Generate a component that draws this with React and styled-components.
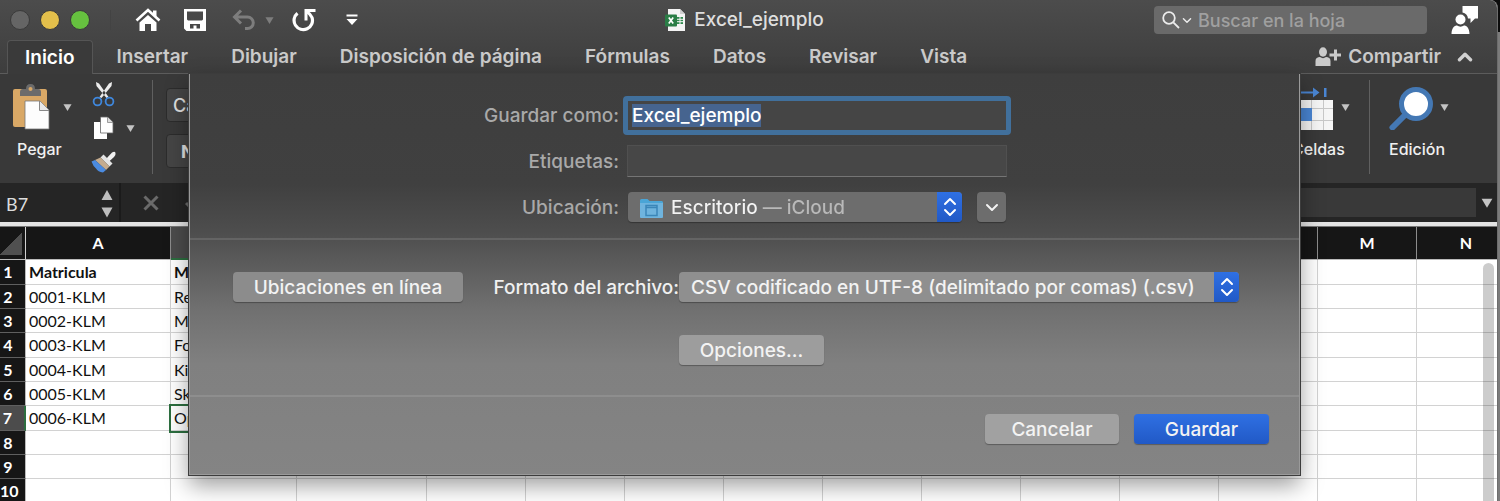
import React, { useEffect, useRef } from "react";
import styled, { createGlobalStyle, css } from "styled-components";

const Global = createGlobalStyle`
  * { box-sizing: border-box; }
  body { margin: 0; background: #7b7b7b; font-family: Inter, "Liberation Sans", sans-serif; }
  button, input, select { font: inherit; margin: 0; }
  svg { display: block; flex: none; }
`;

const Desktop = styled.div`
  min-height: 100vh;
  padding-right: 2px;
  background: linear-gradient(#0c0c0c 32px, #7b7b7b 32px);
`;
const Window = styled.div`
  position: relative;
  height: 100vh;
  overflow: hidden;
  background: #fff;
  border-right: 1px solid #6d6d6d;
  border-top-right-radius: 8px;
`;

/* Title bar and tabs */
const Chrome = styled.header`
  background: linear-gradient(#4c4c4c, #3d3d3d);
`;
const TitleBar = styled.div`
  display: grid;
  grid-template-columns: 1fr auto 1fr;
  align-items: center;
  height: 40px;
  padding-right: 8px;
`;
const TitleLeft = styled.div`
  display: flex;
  align-items: center;
  height: 38px;
`;
const Lights = styled.div`
  display: flex;
  gap: 10px;
  padding: 0 20px 0 10px;
  border-right: 1px solid #434343;
`;
const Light = styled.button`
  width: 20px;
  height: 20px;
  padding: 0;
  border: 1px solid #3a3a3a;
  border-radius: 50%;
  background: ${(p) => p.$color};
`;
const QuickTools = styled.div`
  display: flex;
  align-items: center;
  padding-left: 24px;
`;
const IconButton = styled.button`
  display: flex;
  align-items: center;
  justify-content: center;
  width: ${(p) => p.$w || 24}px;
  padding: 0;
  border: 0;
  background: none;
  color: ${(p) => p.$color || "#fff"};
`;
const Title = styled.h1`
  display: flex;
  align-items: center;
  gap: 8px;
  margin: 0;
  font-size: 19px;
  line-height: 24px;
  font-weight: 500;
  color: #dedede;
`;
const TitleRight = styled.div`
  display: flex;
  align-items: center;
  justify-content: flex-end;
  gap: 24px;
  padding-right: 10px;
`;
const Search = styled.label`
  display: flex;
  align-items: center;
  gap: 2px;
  width: 273px;
  height: 28px;
  padding-left: 8px;
  border-radius: 4px;
  background: #6a6a6a;
  color: #ececec;
`;
const SearchInput = styled.input`
  flex: 1;
  min-width: 0;
  margin-left: 4px;
  padding: 0;
  border: 0;
  outline: 0;
  background: none;
  color: #fff;
  font-size: 18px;
  font-weight: 500;
  &::placeholder { color: #a0a0a0; opacity: 1; }
`;
const TabBar = styled.nav`
  display: flex;
  align-items: stretch;
  height: 34px;
  border-bottom: 1px solid #5c5c5c;
  padding-left: 7px;
`;
const Tab = styled.button`
  padding: 1px 21px 0 22px;
  border: 0;
  background: none;
  font-size: 19px;
  line-height: 32px;
  font-weight: 600;
  color: #cacaca;
  ${(p) => p.$active && css`
    height: 34px;
    padding: 0 18px 0 17px;
    margin-right: 1px;
    border: 1px solid #555;
    border-bottom: 0;
    border-radius: 4px 4px 0 0;
    background: #3a3a3a;
    color: #fff;
  `}
`;
const TabActions = styled.div`
  display: flex;
  align-items: center;
  gap: 16px;
  margin-left: auto;
  padding: 0 24px 0 0;
`;
const Share = styled.button`
  display: flex;
  align-items: center;
  gap: 6px;
  padding: 0;
  border: 0;
  background: none;
  color: #cacaca;
  font-size: 19px;
  font-weight: 600;
`;

/* Ribbon */
const Ribbon = styled.div`
  display: flex;
  justify-content: space-between;
  height: 109px;
  padding: 6px 48px 0 11px;
  background: #393939;
`;
const Group = styled.div`
  display: flex;
`;
const BigTool = styled.button`
  display: grid;
  grid-template-columns: ${(p) => p.$icon}px auto;
  align-items: center;
  column-gap: ${(p) => p.$gap || 12}px;
  align-content: start;
  padding: 4px 0 0;
  border: 0;
  background: none;
  color: #f0f0f0;
  font-size: 16px;
  line-height: 20px;
  font-weight: 500;
`;
const ToolName = styled.span`
  grid-column: 1 / -1;
  margin-top: 9px;
  text-align: left;
  padding-left: ${(p) => p.$indent || 0}px;
`;
const SmallTools = styled.div`
  display: grid;
  grid-template-columns: 24px 12px;
  grid-auto-rows: 34px;
  column-gap: 10px;
  align-items: center;
  margin-left: 20px;
  margin-top: -3px;
`;
const Divider = styled.div`
  width: 1px;
  height: 94px;
  margin: 0 ${(p) => p.$right}px 0 ${(p) => p.$left}px;
  background: #606060;
`;
const FontTools = styled.div`
  display: grid;
  gap: 12px;
  align-content: start;
  padding-top: 8px;
`;
const FontBox = styled.button`
  width: 160px;
  height: 34px;
  border: 1px solid #2c2c2c;
  border-radius: 4px;
  background: #454545;
  color: #e0e0e0;
  font-size: 18px;
  text-align: left;
  font-weight: ${(p) => (p.$bold ? 700 : 500)};
  padding: 0 0 0 ${(p) => (p.$bold ? 14 : 6)}px;
`;

/* Formula bar */
const FormulaBar = styled.div`
  display: flex;
  align-items: center;
  height: 39px;
  background: #252525;
`;
const NameBox = styled.label`
  display: flex;
  align-items: center;
  justify-content: space-between;
  width: 121px;
  height: 39px;
  padding: 2px 5px 0 6px;
  border-right: 2px solid #1b1b1b;
`;
const NameInput = styled.input`
  width: 80px;
  padding: 0;
  border: 0;
  background: none;
  color: #dcdcdc;
  font-family: Lato, "Liberation Sans", sans-serif;
  font-size: 18px;
`;
const FormulaActions = styled.div`
  display: flex;
  gap: 26px;
  padding: 0 20px 0 22px;
  color: #6a6a6a;
`;
const FormulaInput = styled.input`
  flex: 1;
  height: 29px;
  border: 0;
  background: #393939;
  color: #fff;
`;
const Sheet = styled.div`
  position: relative;
  border-top: 4px solid #e4e4e4;
  background: #777;
  padding-top: 1px;
`;
const Grid = styled.table`
  width: 1600px;
  table-layout: fixed;
  border-collapse: separate;
  border-spacing: 0;
  background: #fff;
  font-family: Lato, "Liberation Sans", sans-serif;
  font-size: 16px;
  line-height: 22px;
`;
const ColHead = styled.th`
  height: 33px;
  padding: 0;
  border-right: 1px solid #8c8c8c;
  border-bottom: 1px solid #bbb;
  background: #161616;
  color: #fff;
  ${(p) => p.$active && css`
    background: #4c4c4c;
    border-bottom: 2px solid #2c6e3f;
  `}
`;
const Corner = styled(ColHead)`
  background: linear-gradient(135deg, transparent 50%, #505050 50%) 0 6px / 22px 22px no-repeat #161616;
  border-right-color: #d0d0d0;
`;
const Row = styled.tr`
  height: 24px;
  &:nth-child(3n + 1) { height: 25px; }
`;
const RowHead = styled.th`
  padding: 0 9px 0 0;
  border-right: 1px solid #bbb;
  border-bottom: 1px solid #5f5f5f;
  background: #161616;
  color: #fff;
  white-space: nowrap;
  ${(p) => p.$active && css`
    background: #4c4c4c;
    border-right: 2px solid #2c6e3f;
  `}
`;
const Cell = styled.td`
  padding: 0 3px;
  border-right: 1px solid #d2d2d2;
  border-bottom: 1px solid #d2d2d2;
  color: #111;
  overflow: hidden;
  white-space: nowrap;
  font-weight: ${(p) => (p.$bold ? 700 : 400)};
  ${(p) => p.$active && css`outline: 2px solid #2c6e3f;`}
`;
const ScrollThumb = styled.div`
  position: absolute;
  top: 37px;
  right: 3px;
  width: 11px;
  height: 400px;
  border-radius: 6px;
  background: rgba(0, 0, 0, 0.2);
`;

/* Save sheet */
const SheetLayer = styled.div`
  position: absolute;
  inset: 74px 0 auto;
  display: flex;
  justify-content: center;
  padding-right: 8px;
`;
const Dialog = styled.form`
  width: 1111px;
  border: 1px solid #9a9a9a;
  border-top: 0;
  background: linear-gradient(#3e3e3e 0, #404040 110px, #4e4e4e 160px, #707070 235px, #808080 290px, #848484 100%);
  box-shadow: 0 0 0 1px #3c3c3c, 0 10px 22px rgba(0, 0, 0, 0.4);
  color: #f0f0f0;
  font-size: 19px;
  line-height: 25px;
  font-weight: 500;
`;
const NameSection = styled.div`
  display: grid;
  grid-template-columns: 1fr 388px;
  grid-auto-rows: 46px;
  align-items: center;
  column-gap: 4px;
  padding: 18px 288px 8px 0;
  border-bottom: 2px solid #646464;
`;
const FieldLabel = styled.label`
  text-align: right;
  color: ${(p) => (p.$bright ? "#f0f0f0" : "#a9a9a9")};
`;
const NameField = styled.input`
  height: 39px;
  padding: 0 4px;
  border: 5px solid #41709c;
  border-radius: 4px;
  outline: 0;
  background: #454545;
  color: #fff;
  line-height: 25px;
  &::selection { background: #46648f; color: #fff; }
`;
const TagsField = styled.input`
  height: 32px;
  margin: 0 4px;
  border: 1px solid #505050;
  border-bottom-color: #757575;
  background: #474747;
  color: #fff;
`;
const LocationRow = styled.div`
  display: flex;
  gap: 15px;
  padding: 0 5px;
`;
const Popup = styled.div`
  display: flex;
  flex: 1;
  height: 30px;
  border-radius: 4px;
  overflow: hidden;
  background: ${(p) => p.$tone};
  box-shadow: 0 1px 1px rgba(0, 0, 0, 0.3);
`;
const PopupSelect = styled.select`
  flex: 1;
  min-width: 0;
  appearance: none;
  padding: 0 0 0 12px;
  border: 0;
  outline: 0;
  background: none;
  color: #f3f3f3;
`;
const PlaceSelect = styled(PopupSelect)`
  padding-left: 8px;
  background: linear-gradient(90deg, #f3f3f3 98px, #b9b9b9 98px);
  background-clip: text;
  -webkit-background-clip: text;
  color: transparent;
`;
const FolderSlot = styled.span`
  display: flex;
  align-items: center;
  padding: 2px 0 0 12px;
`;
const Stepper = styled.span`
  display: flex;
  align-items: center;
  justify-content: center;
  width: 25px;
  background: linear-gradient(#2f70e3, #2159c6);
  color: #fff;
`;
const PushButton = styled.button`
  display: flex;
  align-items: center;
  justify-content: center;
  width: ${(p) => p.$w}px;
  height: 30px;
  padding: 0;
  border: 0;
  border-radius: 4px;
  background: ${(p) => (p.$primary ? "linear-gradient(#2f70e3, #2159c6)" : p.$tone)};
  box-shadow: 0 1px 1px rgba(0, 0, 0, 0.3);
  color: #f3f3f3;
`;
const FormatSection = styled.div`
  display: grid;
  grid-template-columns: 230px 216px 560px;
  gap: 33px 0;
  align-items: center;
  padding: 32px 0 30px 43px;
  border-bottom: 2px solid #8e8e8e;
`;
const OptionsSlot = styled.div`
  grid-column: 3;
`;
const Footer = styled.div`
  display: flex;
  justify-content: flex-end;
  gap: 15px;
  padding: 17px 30px 30px;
`;

const Down = ({ size = 9, color = "#c4c4c4" }) => (
  <svg width={size} height={size} viewBox="0 0 10 10"><path d="M0.5 1.5h9L5 9z" fill={color} /></svg>
);
const Chevron = ({ w = 14, h = 9, up, sw = 2 }) => (
  <svg width={w} height={h} viewBox="0 0 14 9" fill="none" stroke="currentColor" strokeWidth={sw} strokeLinecap="round" strokeLinejoin="round">
    <path d={up ? "M2 7l5-5 5 5" : "M2 2l5 5 5-5"} />
  </svg>
);
const StepIcon = () => (
  <svg width="14" height="20" viewBox="0 0 14 20" fill="none" stroke="currentColor" strokeWidth="2" strokeLinecap="round" strokeLinejoin="round">
    <path d="M2 7l5-5 5 5M2 13l5 5 5-5" />
  </svg>
);
const HomeIcon = () => (
  <svg width="26" height="24" viewBox="0 0 26 24">
    <path d="M1.500 12.500L13 2L24.500 12.500" fill="none" stroke="#fff" strokeWidth="2.600" />
    <path d="M18 2.500h3.500v6.500l-3.500-3z M4.500 14.500L13 7L21.500 14.500V23h-5.500v-7h-6v7H4.500z" fill="#fff" />
  </svg>
);
const SaveIcon = () => (
  <svg width="22" height="22" viewBox="0 0 22 22">
    <path fillRule="evenodd" fill="#fff" d="M0 0h22v22H2.500L0 19.500z M3 2.500v8l1 1h14l1-1v-8z M6 15v4.500h3.500v-3h3V19.500H16V15z" />
  </svg>
);
const UndoIcon = () => (
  <svg width="24" height="22" viewBox="0 0 24 22" fill="none" stroke="#7d7d7d" strokeWidth="3">
    <path d="M9 1.500L2.500 8L9 14.500M3 8h12.500a5.800 5.800 0 0 1 0 11.600H13" />
  </svg>
);
const RedoIcon = () => (
  <svg width="24" height="24" viewBox="0 0 24 24" fill="none" stroke="#fff" strokeWidth="3.200">
    <path d="M5.500 5.200A9.200 9.200 0 1 0 20 9.500C19 7 17 5 14 3" />
    <path d="M23.500 2.500H14V12.500" strokeWidth="3" />
  </svg>
);
const CustomizeIcon = () => (
  <svg width="12" height="12" viewBox="0 0 12 12" fill="#fff"><path d="M0.500 0.500h11v2h-11zM0.500 5h11L6 11z" /></svg>
);
const ExcelDoc = () => (
  <svg width="21" height="23" viewBox="0 0 21 23">
    <path d="M3 0h12l5 5v17H3z" fill="#f4f4f4" /><path d="M15 0l5 5h-5z" fill="#cfcfcf" />
    <path d="M12 8h6v7h-6z" fill="#2f8a4e" /><path d="M12 10.300h6M12 12.700h6M15 8v7" stroke="#f4f4f4" strokeWidth="1" />
    <rect x="0" y="5.500" width="12" height="12" rx="1" fill="#2a7d46" />
    <path d="M3.800 8.500l4.400 6M8.200 8.500l-4.400 6" stroke="#fff" strokeWidth="1.700" />
  </svg>
);
const SearchIcon = () => (
  <svg width="18" height="18" viewBox="0 0 18 18" fill="none" stroke="currentColor" strokeWidth="1.800">
    <circle cx="7" cy="7" r="5.800" /><path d="M11.300 11.300L17 17" />
  </svg>
);
const FeedbackIcon = () => (
  <svg width="28" height="28" viewBox="0 0 28 28" fill="#fff">
    <path d="M11.500 0H27v12.500h-3L19.500 17v-4.500h-2.500a7 7 0 0 0-5.500-6z" />
    <circle cx="9.500" cy="13.500" r="5" /><path d="M0.500 28c0-6 3-8.500 5.500-8.500 2 1.500 5 1.500 7 0 2.500 0 5.500 2.500 5.500 8.500z" />
  </svg>
);
const ShareIcon = () => (
  <svg width="27" height="19" viewBox="0 0 27 19" fill="currentColor">
    <ellipse cx="8" cy="5" rx="4" ry="4.700" /><path d="M0.500 19v-5c0-3 2-4 4.500-4 2 1.500 4 1.500 6 0 2.500 0 4.500 1 4.500 4v5z" />
    <path d="M19 2.500h3v4h4v3h-4v4h-3v-4h-4.500v-3H19z" />
  </svg>
);
const PasteIcon = () => (
  <svg width="40" height="46" viewBox="0 0 40 46">
    <rect x="2" y="5" width="34" height="38" rx="2" fill="#d9a866" />
    <path d="M9 12V8q0-3 3-3h3q0-5 4.500-5T24 5h3q3 0 3 3v4z" fill="#6b6b6b" /><circle cx="19.500" cy="5" r="2" fill="#d9a866" />
    <path d="M14 17h15l9 9v19H14z" fill="#fdfdfd" stroke="#777" strokeWidth="0.800" /><path d="M28.500 17v9.500H38" fill="#e8e8e8" stroke="#888" />
  </svg>
);
const CutIcon = () => (
  <svg width="24" height="26" viewBox="0 0 24 26" fill="none">
    <path d="M4 1l3 1.500L16.500 16l-2 1L4.500 5zM20 1l-3 1.500L7.500 16l2 1L19.500 5z" fill="#ececec" />
    <circle cx="5.500" cy="20.500" r="3.900" stroke="#3f87dc" strokeWidth="1.800" /><circle cx="17.500" cy="20.500" r="3.900" stroke="#3f87dc" strokeWidth="1.800" />
  </svg>
);
const CopyIcon = () => (
  <svg width="22" height="24" viewBox="0 0 22 24">
    <path d="M1 6h9l4 5v12H1z" fill="#fff" /><path d="M7.500 1h7l5.500 5.500V17H7.500z" fill="#fff" stroke="#666" strokeWidth="0.800" />
    <path d="M14.500 1v5.500H20" fill="#ddd" stroke="#888" strokeWidth="0.800" />
  </svg>
);
const BrushIcon = () => (
  <svg width="26" height="23" viewBox="0 0 26 23">
    <path d="M15 8L21 1.500Q24 0 24.500 2T23 6L17.500 11z" fill="#f2f2f2" />
    <path d="M12.500 3.500L21.500 12.500L18.500 15.500L9.500 6.500z" fill="#e4e4e4" />
    <path d="M9.500 6.500L18.500 15.500L15 19L4 9z" fill="#c4ab8e" />
    <path d="M4 9L15 19L12 21.500Q7 21 5 17.500Q2 15 0.500 10.500z" fill="#4b8be0" />
  </svg>
);
const CellsIcon = () => (
  <svg width="50" height="46" viewBox="0 0 50 46">
    <path d="M2 8.500h28" stroke="#4a86d4" strokeWidth="2" />
    <path d="M29 3.500l6.500 5-6.500 5z M40 4h2.500v9H40z" fill="#4a86d4" />
    <path d="M0 16h49v30H0z" fill="#f6f6f6" /><path d="M0 24.500h49M0 36.500h49M15.500 16v30M27.500 16v30M39.500 16v30" stroke="#c8c8c8" />
    <path d="M10 24h18v13H10z" fill="#4a86d4" />
  </svg>
);
const FindIcon = () => (
  <svg width="46" height="46" viewBox="0 0 46 46">
    <path d="M3.500 43.500L17 30" stroke="#4478b4" strokeWidth="6" strokeLinecap="round" />
    <circle cx="27" cy="20" r="14.500" fill="#fff" stroke="#4478b4" strokeWidth="5" />
  </svg>
);
const FolderIcon = () => (
  <svg width="23" height="19" viewBox="0 0 23 19">
    <path d="M0 1.500Q0 0 1.500 0h6l2 2H22L23 3v14H0z" fill="#4aa5d6" /><path d="M0 4h23V18q0 1-1 1H1q-1 0-1-1z" fill="#6fb4de" />
    <path d="M6 6.500h11v10H6zM6 8.500h11" fill="none" stroke="#3b86b8" strokeWidth="1.500" />
  </svg>
);
const UpDown = () => (
  <svg width="14" height="30" viewBox="0 0 14 30" fill="#bdbdbd"><path d="M1.500 11h11L7 1zM1.500 18.500h11L7 28.500z" /></svg>
);
const CrossIcon = () => (
  <svg width="16" height="16" viewBox="0 0 16 16" stroke="currentColor" strokeWidth="3"><path d="M1.500 1.500l13 13M14.500 1.500l-13 13" /></svg>
);
const CheckIcon = () => (
  <svg width="16" height="16" viewBox="0 0 16 16" fill="none" stroke="currentColor" strokeWidth="3"><path d="M1 8l5 5 9-11" /></svg>
);

const tabs = ["Insertar", "Dibujar", "Disposición de página", "Fórmulas", "Datos", "Revisar", "Vista"];
const columns = [
  ["A", 145], ["B", 126], ["C", 130], ["D", 99], ["E", 99], ["F", 99], ["G", 99],
  ["H", 99], ["I", 99], ["J", 99], ["K", 99], ["L", 99], ["M", 99], ["N", 99],
];
const rows = [
  ["Matricula", "Marca"], ["0001-KLM", "Renault"], ["0002-KLM", "Mazda"], ["0003-KLM", "Ford"],
  ["0004-KLM", "Kia"], ["0005-KLM", "Skoda"], ["0006-KLM", "Opel"], [], [], [],
];

export default function App() {
  const nameRef = useRef(null);
  useEffect(() => {
    nameRef.current.focus();
    nameRef.current.select();
  }, []);

  return (
    <Desktop>
      <Global />
      <Window>
        <Chrome>
          <TitleBar>
            <TitleLeft>
              <Lights>
                <Light aria-label="Cerrar" $color="#656565" />
                <Light aria-label="Minimizar" $color="#e3bf4b" />
                <Light aria-label="Ampliar" $color="#66c13f" />
              </Lights>
              <QuickTools>
                <IconButton aria-label="Inicio" $w={26}><HomeIcon /></IconButton>
                <IconButton aria-label="Guardar" $w={68}><SaveIcon /></IconButton>
                <IconButton aria-label="Deshacer" $w={30}><UndoIcon /></IconButton>
                <IconButton aria-label="Historial" $w={20}><Down color="#7d7d7d" /></IconButton>
                <IconButton aria-label="Rehacer" $w={50}><RedoIcon /></IconButton>
                <IconButton aria-label="Personalizar" $w={46}><CustomizeIcon /></IconButton>
              </QuickTools>
            </TitleLeft>
            <Title><ExcelDoc />Excel_ejemplo</Title>
            <TitleRight>
              <Search>
                <SearchIcon />
                <Chevron w={10} h={7} />
                <SearchInput placeholder="Buscar en la hoja" aria-label="Buscar en la hoja" />
              </Search>
              <IconButton aria-label="Comentarios" $w={28}><FeedbackIcon /></IconButton>
            </TitleRight>
          </TitleBar>
          <TabBar>
            <Tab $active>Inicio</Tab>
            {tabs.map((t) => <Tab key={t}>{t}</Tab>)}
            <TabActions>
              <Share><ShareIcon />Compartir</Share>
              <IconButton aria-label="Contraer" $w={16} $color="#d0d0d0"><Chevron w={16} h={10} up sw={3} /></IconButton>
            </TabActions>
          </TabBar>
        </Chrome>

        <Ribbon>
          <Group>
            <BigTool $icon={40}><PasteIcon /><Down /><ToolName $indent={6}>Pegar</ToolName></BigTool>
            <SmallTools>
              <IconButton aria-label="Cortar"><CutIcon /></IconButton><span />
              <IconButton aria-label="Copiar"><CopyIcon /></IconButton><Down />
              <IconButton aria-label="Copiar formato"><BrushIcon /></IconButton>
            </SmallTools>
            <Divider $left={14} $right={13} />
            <FontTools>
              <FontBox>Calibri (Cuerpo)</FontBox>
              <FontBox $bold>N</FontBox>
            </FontTools>
          </Group>
          <Group>
            <BigTool $icon={50} $gap={7}><CellsIcon /><Down /><ToolName $indent={8}>Celdas</ToolName></BigTool>
            <Divider $left={19} $right={19} />
            <BigTool $icon={46} $gap={5}><FindIcon /><Down /><ToolName>Edición</ToolName></BigTool>
          </Group>
        </Ribbon>

        <FormulaBar>
          <NameBox><NameInput defaultValue="B7" aria-label="Cuadro de nombres" /><UpDown /></NameBox>
          <FormulaActions><CrossIcon /><CheckIcon /></FormulaActions>
          <FormulaInput aria-label="Barra de fórmulas" />
          <IconButton aria-label="Expandir" $w={21}><Down size={12} /></IconButton>
        </FormulaBar>

        <Sheet>
          <Grid>
            <colgroup>
              <col style={{ width: 26 }} />
              {columns.map(([name, w]) => <col key={name} style={{ width: w }} />)}
              <col />
            </colgroup>
            <thead>
              <tr>
                <Corner aria-label="Seleccionar todo" />
                {columns.map(([name]) => <ColHead key={name} $active={name === "B"}>{name}</ColHead>)}
              </tr>
            </thead>
            <tbody>
              {rows.map((row, r) => (
                <Row key={r}>
                  <RowHead $active={r === 6}>{r + 1}</RowHead>
                  {columns.map(([name], c) => (
                    <Cell key={name} $bold={r === 0} $active={r === 6 && c === 1}>{row[c]}</Cell>
                  ))}
                </Row>
              ))}
            </tbody>
          </Grid>
          <ScrollThumb />
        </Sheet>

        <SheetLayer>
          <Dialog onSubmit={(e) => e.preventDefault()}>
            <NameSection>
              <FieldLabel htmlFor="name">Guardar como:</FieldLabel>
              <NameField id="name" ref={nameRef} defaultValue="Excel_ejemplo" />
              <FieldLabel htmlFor="tags">Etiquetas:</FieldLabel>
              <TagsField id="tags" />
              <FieldLabel htmlFor="place">Ubicación:</FieldLabel>
              <LocationRow>
                <Popup $tone="#6d6d6d">
                  <FolderSlot><FolderIcon /></FolderSlot>
                  <PlaceSelect id="place"><option>Escritorio — iCloud</option></PlaceSelect>
                  <Stepper><StepIcon /></Stepper>
                </Popup>
                <PushButton type="button" aria-label="Mostrar más" $w={29} $tone="#6d6d6d"><Chevron /></PushButton>
              </LocationRow>
            </NameSection>
            <FormatSection>
              <PushButton type="button" $w={230} $tone="#8c8c8c">Ubicaciones en línea</PushButton>
              <FieldLabel htmlFor="format" $bright>Formato del archivo:</FieldLabel>
              <Popup $tone="#8f8f8f">
                <PopupSelect id="format"><option>CSV codificado en UTF-8 (delimitado por comas) (.csv)</option></PopupSelect>
                <Stepper><StepIcon /></Stepper>
              </Popup>
              <OptionsSlot><PushButton type="button" $w={145} $tone="#9d9d9d">Opciones...</PushButton></OptionsSlot>
            </FormatSection>
            <Footer>
              <PushButton type="button" $w={134} $tone="#a1a1a1">Cancelar</PushButton>
              <PushButton $w={135} $primary>Guardar</PushButton>
            </Footer>
          </Dialog>
        </SheetLayer>
      </Window>
    </Desktop>
  );
}
